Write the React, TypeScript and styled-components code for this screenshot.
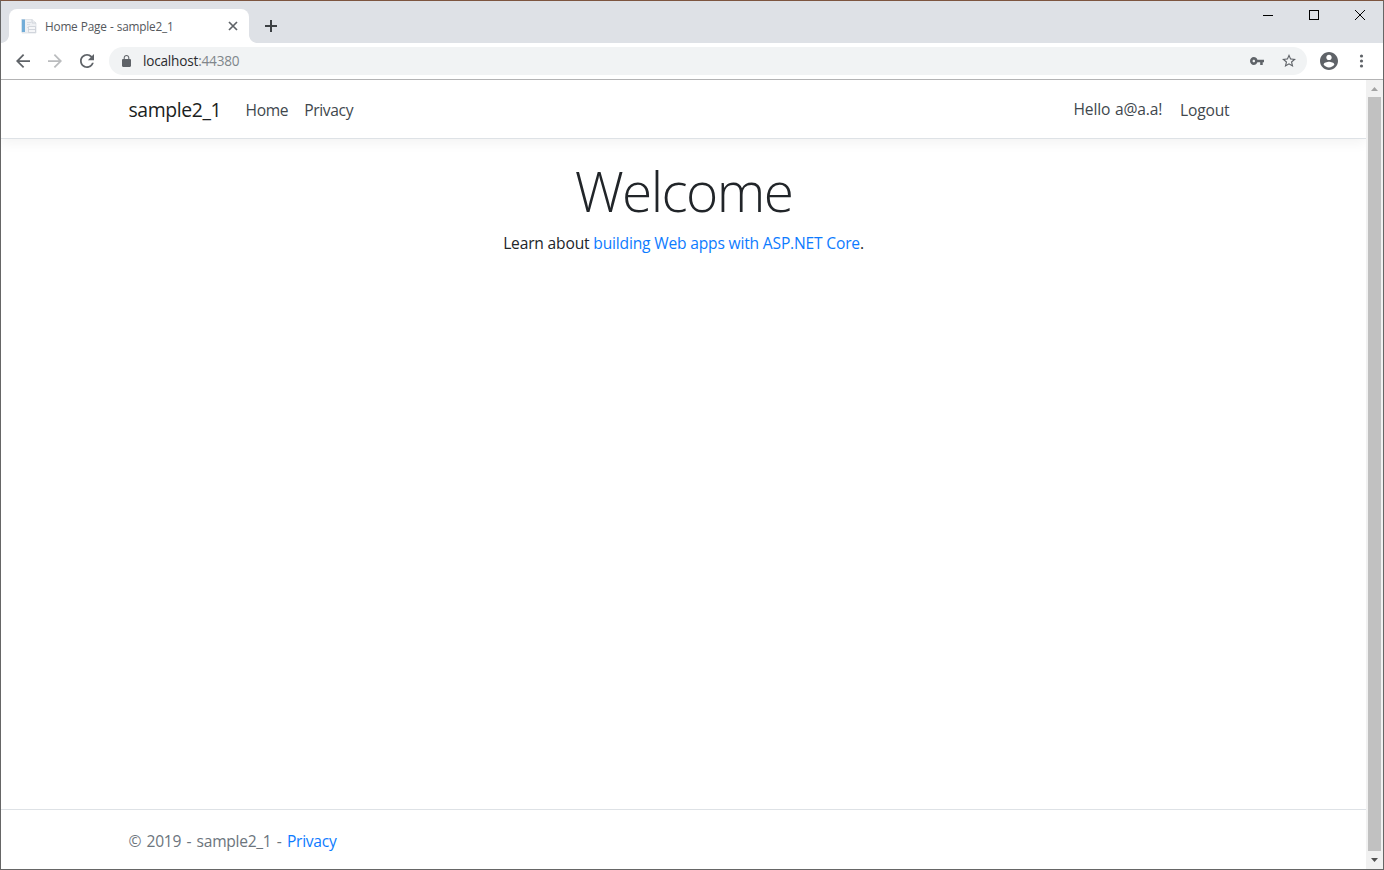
import React from "react";
import styled, { createGlobalStyle } from "styled-components";

const GlobalStyle = createGlobalStyle`
  *, *::before, *::after { box-sizing: border-box; }
  body { margin: 0; background: #fff; font-family: "Open Sans", "Noto Sans", sans-serif; overflow: hidden; }
`;

const BrowserWindow = styled.div`
  width: 1384px;
  height: 870px;
  display: flex;
  flex-direction: column;
  border: 1px solid #666;
  border-top-color: #7d5540;
  background: #fff;
`;

const TabStrip = styled.div`
  flex: none;
  height: 42px;
  display: flex;
  background: #dee1e6;
`;

const Tab = styled.div`
  position: relative;
  width: 240px;
  height: 34px;
  margin: 8px 0 0 8px;
  padding: 0 11px 0 12px;
  display: flex;
  align-items: center;
  background: #fff;
  border-radius: 8px 8px 0 0;
  &::before, &::after {
    content: "";
    position: absolute;
    bottom: 0;
    width: 8px;
    height: 8px;
  }
  &::before { left: -8px; background: radial-gradient(circle at 0 0, transparent 7.5px, #fff 8.2px); }
  &::after { right: -8px; background: radial-gradient(circle at 100% 0, transparent 7.5px, #fff 8.2px); }
`;

const TabTitle = styled.span`
  flex: 1;
  margin-left: 8px;
  font-size: 11.8px;
  letter-spacing: -0.2px;
  word-spacing: 0.4px;
  line-height: 16px;
  color: #54585c;
  white-space: nowrap;
`;

const NewTab = styled.div`
  display: flex;
  margin: 19px 0 0 16px;
`;

const WindowControls = styled.div`
  display: flex;
  margin-left: auto;
  height: 29px;
`;

const WindowButton = styled.div`
  width: 46px;
  display: flex;
  align-items: center;
  justify-content: center;
`;

const Toolbar = styled.div`
  flex: none;
  height: 37px;
  display: flex;
  align-items: center;
  padding: 0 19px 1px 15px;
  border-bottom: 1px solid #b3b3b4;
`;

const NavIcons = styled.div`
  display: flex;
  gap: 18px;
`;

const AddressBar = styled.div`
  flex: 1;
  height: 28px;
  margin-left: 15px;
  padding: 0 11px 0 13px;
  display: flex;
  align-items: center;
  border-radius: 14px;
  background: #f1f3f4;
`;

const Url = styled.span`
  flex: 1;
  margin-left: 12px;
  font-size: 13.6px;
  letter-spacing: -0.2px;
  line-height: 20px;
  color: #2b2c2f;
`;

const Port = styled.span`
  color: #80868b;
`;

const AddressActions = styled.div`
  display: flex;
  align-items: center;
  gap: 18px;
`;

const ProfileArea = styled.div`
  display: flex;
  align-items: center;
  gap: 21px;
  margin-left: 13px;
`;

const Viewport = styled.div`
  flex: 1;
  min-height: 0;
  display: flex;
`;

const Page = styled.div`
  flex: 1;
  display: flex;
  flex-direction: column;
  font-size: 15.6px;
  letter-spacing: -0.18px;
  line-height: 24px;
  color: #212529;
  overflow: hidden;
`;

const Container = styled.div`
  width: 1140px;
  margin: 0 auto;
  padding: 0 15px;
  display: flex;
  align-items: center;
`;

const Navbar = styled.header`
  flex: none;
  height: 59px;
  display: flex;
  border-bottom: 1px solid #dee2e6;
  box-shadow: 0 4px 12px rgba(0, 0, 0, 0.05);
`;

const Brand = styled.a`
  width: 109px;
  padding-top: 1px;
  font-size: 19.4px;
  letter-spacing: -0.4px;
  line-height: 30px;
  color: #1b1e21;
`;

const NavList = styled.nav<{ $end?: boolean }>`
  display: flex;
  align-items: flex-start;
  padding-top: 2px;
  letter-spacing: ${(p) => (p.$end ? "-0.18px" : "-0.35px")};
  margin-left: ${(p) => (p.$end ? "auto" : "0")};
  margin-right: ${(p) => (p.$end ? "1px" : "0")};
`;

const NavLink = styled.a`
  padding: 0 8px;
  color: #41474d;
`;

const Greeting = styled(NavLink)`
  margin-top: -1px;
  padding-right: 10px;
  word-spacing: 1px;
`;

const Main = styled.main`
  flex: 1;
  padding-top: 18px;
  text-align: center;
`;

const Heading = styled.h1`
  margin: 0 0 7px;
  font-size: 55px;
  font-weight: 300;
  letter-spacing: -1.6px;
  line-height: 67px;
`;

const Lead = styled.p`
  margin: 0;
`;

const Link = styled.a`
  color: #0d7bff;
`;

const Footer = styled.footer`
  flex: none;
  height: 60px;
  display: flex;
  border-top: 1px solid #dee2e6;
  color: #6c757d;
`;

const FooterText = styled.span`
  padding-top: 3px;
  letter-spacing: -0.28px;
  word-spacing: 1.6px;
  white-space: nowrap;
`;

const Scrollbar = styled.div`
  flex: none;
  width: 17px;
  display: flex;
  flex-direction: column;
  align-items: center;
  background: #f1f1f1;
`;

const ScrollArrow = styled.div`
  height: 17px;
  display: flex;
  align-items: center;
`;

const Thumb = styled.div`
  width: 13px;
  height: 754px;
  background: #c1c1c1;
`;

type IconProps = { box: string; w: number; h: number; d: string; color?: string };
const Icon = ({ box, w, h, d, color = "#5f6368" }: IconProps) => (
  <svg viewBox={box} width={w} height={h} preserveAspectRatio="none" fill={color} aria-hidden="true">
    <path d={d} />
  </svg>
);

const PageIcon = () => (
  <svg width="16" height="16" viewBox="0 0 16 16">
    <path d="M1 1.5h10l4 3.5v10H1z" fill="#eff1f4" stroke="#d7dbe1" strokeWidth=".7" />
    <path d="M1 1.5h3V14H1z" fill="#72add8" />
    <path d="M0 1h1v13H0z" fill="#d5e4ef" />
    <path d="M6 4.500h4M6 6.500h3M6 9.500h1" stroke="#d3d8de" strokeWidth=".8" />
    <path d="M7.500 8.500h7v6h-7z" fill="#f5f6f8" stroke="#c9ced6" strokeWidth=".8" />
    <path d="M7.500 11.500h7M11 1.500v3.500h4" fill="none" stroke="#c9ced6" strokeWidth=".8" />
  </svg>
);

export default function App() {
  return (
    <>
      <GlobalStyle />
      <BrowserWindow>
        <TabStrip>
          <Tab>
            <PageIcon />
            <TabTitle>Home Page - sample2_1</TabTitle>
            <svg width="10" height="10" viewBox="0 0 10 10" stroke="#5f6368" strokeWidth="1.700">
              <path d="M1 1l8 8M9 1l-8 8" />
            </svg>
          </Tab>
          <NewTab>
            <svg width="12" height="12" viewBox="0 0 12 12" fill="#3c4043">
              <path d="M5 0h2v5h5v2H7v5H5V7H0V5h5z" />
            </svg>
          </NewTab>
          <WindowControls>
            <WindowButton>
              <svg width="10" height="11" viewBox="0 0 10 11"><path d="M0 5h10v1H0z" /></svg>
            </WindowButton>
            <WindowButton>
              <svg width="10" height="11" viewBox="0 0 10 11"><rect x=".5" y=".5" width="9" height="9" fill="none" stroke="#000" /></svg>
            </WindowButton>
            <WindowButton>
              <svg width="10" height="11" viewBox="0 0 10 11" stroke="#000"><path d="M0 0l10 10M10 0L0 10" /></svg>
            </WindowButton>
          </WindowControls>
        </TabStrip>
        <Toolbar>
          <NavIcons>
            <Icon box="4 4 16 16" w={14} h={14} d="M20 11H7.830l5.590-5.590L12 4l-8 8 8 8 1.410-1.410L7.830 13H20v-2z" />
            <Icon box="4 4 16 16" w={14} h={14} color="#babcbe" d="M12 4l-1.410 1.410L16.170 11H4v2h12.170l-5.580 5.590L12 20l8-8z" />
            <Icon box="4 4 16 16" w={14} h={14} d="M17.650 6.350C16.200 4.900 14.210 4 12 4c-4.420 0-7.990 3.580-7.990 8s3.570 8 7.990 8c3.730 0 6.840-2.550 7.730-6h-2.080c-.82 2.330-3.040 4-5.650 4-3.310 0-6-2.690-6-6s2.690-6 6-6c1.660 0 3.140.69 4.220 1.780L13 11h7V4l-2.350 2.350z" />
          </NavIcons>
          <AddressBar>
            <Icon box="4 1 16 21" w={9} h={12} d="M18 8h-1V6c0-2.760-2.240-5-5-5S7 3.240 7 6v2H6c-1.100 0-2 .9-2 2v10c0 1.100.9 2 2 2h12c1.100 0 2-.9 2-2V10c0-1.100-.9-2-2-2zM8.900 6c0-1.710 1.390-3.100 3.100-3.100s3.100 1.390 3.100 3.100v2H8.900V6z" />
            <Url>localhost<Port>:44380</Port></Url>
            <AddressActions>
              <Icon box="1 6 22 12" w={14} h={8} d="M12.650 10C11.830 7.670 9.610 6 7 6c-3.310 0-6 2.690-6 6s2.690 6 6 6c2.610 0 4.830-1.670 5.650-4H17v4h4v-4h2v-4H12.650zM7 14c-1.100 0-2-.9-2-2s.9-2 2-2 2 .9 2 2-.9 2-2 2z" />
              <Icon box="2 2 20 19" w={14} h={13} d="M22 9.240l-7.190-.62L12 2 9.190 8.630 2 9.240l5.460 4.730L5.820 21 12 17.270 18.180 21l-1.630-7.030L22 9.240zM12 15.400l-3.760 2.270 1-4.280-3.320-2.880 4.380-.38L12 6.100l1.710 4.040 4.380.38-3.320 2.880 1 4.280L12 15.400z" />
            </AddressActions>
          </AddressBar>
          <ProfileArea>
            <Icon box="2 2 20 20" w={18} h={18} d="M12 2C6.480 2 2 6.480 2 12s4.480 10 10 10 10-4.480 10-10S17.520 2 12 2zm0 3c1.660 0 3 1.340 3 3s-1.340 3-3 3-3-1.340-3-3 1.340-3 3-3zm0 14.200c-2.500 0-4.710-1.280-6-3.220.03-1.990 4-3.080 6-3.080 1.990 0 5.970 1.090 6 3.080-1.290 1.940-3.500 3.220-6 3.220z" />
            <svg width="5" height="14" viewBox="0 0 5 14" fill="#5f6368">
              <circle cx="2.500" cy="2" r="1.600" />
              <circle cx="2.500" cy="7" r="1.600" />
              <circle cx="2.500" cy="12" r="1.600" />
            </svg>
          </ProfileArea>
        </Toolbar>
        <Viewport>
          <Page>
            <Navbar>
              <Container>
                <Brand>sample2_1</Brand>
                <NavList>
                  <NavLink>Home</NavLink>
                  <NavLink>Privacy</NavLink>
                </NavList>
                <NavList $end>
                  <Greeting>Hello a@a.a!</Greeting>
                  <NavLink>Logout</NavLink>
                </NavList>
              </Container>
            </Navbar>
            <Main>
              <Heading>Welcome</Heading>
              <Lead>
                Learn about <Link>building Web apps with ASP.NET Core</Link>.
              </Lead>
            </Main>
            <Footer>
              <Container>
                <FooterText>
                  © 2019 - sample2_1 - <Link>Privacy</Link>
                </FooterText>
              </Container>
            </Footer>
          </Page>
          <Scrollbar>
            <ScrollArrow>
              <svg width="7" height="4" viewBox="0 0 7 4" fill="#a3a3a3"><path d="M3.500 0L7 4H0z" /></svg>
            </ScrollArrow>
            <Thumb />
            <ScrollArrow>
              <svg width="7" height="4" viewBox="0 0 7 4" fill="#505050"><path d="M0 0h7L3.500 4z" /></svg>
            </ScrollArrow>
          </Scrollbar>
        </Viewport>
      </BrowserWindow>
    </>
  );
}
